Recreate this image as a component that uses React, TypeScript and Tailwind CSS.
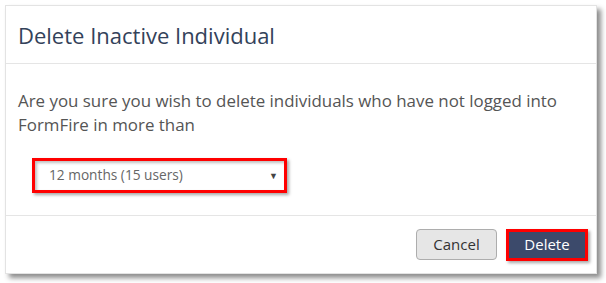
export default function App() {
  return (
    <div className="w-[606px] h-[283px] bg-white pt-[5px] pl-[5px]" style={{ fontFamily: '"Open Sans", sans-serif' }}>
      <div className="w-[592px] h-[269px] bg-white border border-[#e3e3e3] shadow-[4px_4px_5px_rgba(0,0,0,0.45)] flex flex-col">
        {/* Header */}
        <div className="h-[58px] border-b border-[#e5e5e5] px-[12px] flex items-center">
          <h2 className="text-[22px] text-[#33425a] leading-none">Delete Inactive Individual</h2>
        </div>

        {/* Body */}
        <div className="h-[152px] border-b border-[#e5e5e5] px-[12px] pt-[25px]">
          <p className="text-[16.9px] leading-[24px] text-[#555]">
            Are you sure you wish to delete individuals who have not logged into FormFire in more than
          </p>
          <div className="mt-[21px] ml-[14px] w-[255px] h-[35px] border-[3px] border-[#ff0000] shadow-[2px_2px_3px_rgba(0,0,0,0.35)]">
            <div className="h-full flex items-center justify-between pl-[14px] pr-[6px] shadow-[inset_2px_2px_3px_rgba(0,0,0,0.25)]">
              <span className="text-[13.7px] text-[#666]">12 months (15 users)</span>
              <span className="text-[9px] text-[#444]">▼</span>
            </div>
          </div>
        </div>

        {/* Footer */}
        <div className="flex-1 flex items-center justify-end gap-[9px] pr-[8px]">
          <button className="w-[81px] h-[31px] rounded-[4px] bg-[#e6e6e6] border border-[#adadad] text-[15px] text-[#333]">
            Cancel
          </button>
          <button className="w-[82px] h-[32px] bg-[#3c4a6b] border-[3px] border-[#ff0000] shadow-[2px_2px_3px_rgba(0,0,0,0.35)] text-[15px] text-white">
            Delete
          </button>
        </div>
      </div>
    </div>
  );
}
